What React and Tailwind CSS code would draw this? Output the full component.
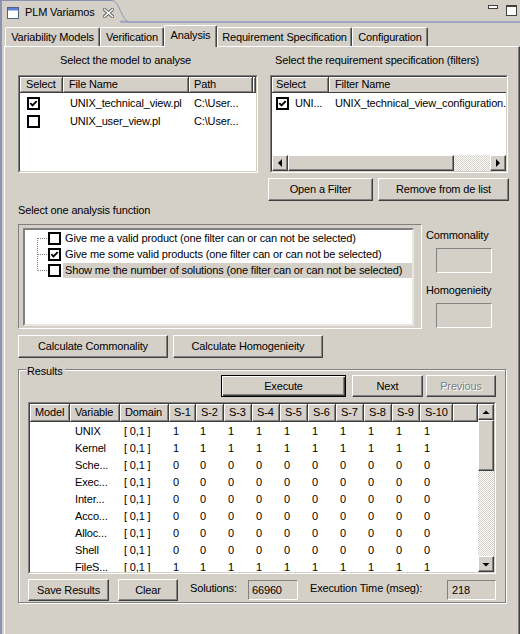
import React from "react";

const RAISED =
  "border border-t-white border-l-white border-r-[#404040] border-b-[#404040] shadow-[inset_-1px_-1px_0_#808080] bg-[#d4d0c8]";
const HCELL =
  "flex items-center h-full shrink-0 border-r border-b border-r-[#404040] border-b-[#404040] shadow-[inset_1px_1px_0_#fff,inset_-1px_-1px_0_#808080] bg-[#d4d0c8]";
const SUNKEN_OUT = "border border-t-[#808080] border-l-[#808080] border-r-white border-b-white";
const SUNKEN_IN = "border border-t-[#404040] border-l-[#404040] border-r-[#d4d0c8] border-b-[#d4d0c8]";
const HATCH = "bg-[repeating-conic-gradient(#d4d0c8_0_25%,#ffffff_0_50%)] bg-[length:2px_2px]";

function Btn({ className = "", children, disabled }) {
  return (
    <div
      className={`${RAISED} flex items-center justify-center shrink-0 whitespace-nowrap ${
        disabled ? "text-[#808080] [text-shadow:1px_1px_0_#fff]" : ""
      } ${className}`}
    >
      {children}
    </div>
  );
}

function Check({ checked }) {
  return (
    <div className="w-[13px] h-[13px] border-2 border-black bg-white flex items-center justify-center shrink-0">
      {checked && (
        <svg width="9" height="9" viewBox="0 0 9 9">
          <path d="M1.3 4.2 L3.5 6.4 L7.7 2.1" fill="none" stroke="#000" strokeWidth="1.9" />
        </svg>
      )}
    </div>
  );
}

function ArrowBtn({ dir }) {
  const pts = {
    left: "5,7 9,3 9,11",
    right: "9,7 5,3 5,11",
    up: "3.5,9 7,5.5 10.5,9",
    down: "3.5,6 10.5,6 7,9.5",
  }[dir];
  return (
    <div className={`${RAISED} w-[16px] h-[16px] shrink-0 flex items-center justify-center`}>
      <svg width="14" height="14" viewBox="0 0 14 14">
        <polygon points={pts} fill="#000" />
      </svg>
    </div>
  );
}

function Conn({ pos }) {
  const y1 = pos === "first" ? 8 : 0;
  const y2 = pos === "last" ? 8.5 : 16;
  return (
    <svg width="23" height="16" className="shrink-0">
      <line x1="12.5" y1={y1} x2="12.5" y2={y2} stroke="#808080" strokeDasharray="1 1" />
      <line x1="13" y1="8.5" x2="23" y2="8.5" stroke="#808080" strokeDasharray="1 1" />
    </svg>
  );
}

function Tab({ children, w, selected }) {
  return (
    <div
      className={`${w} shrink-0 flex items-center justify-center whitespace-nowrap border-t border-l border-white border-r border-r-[#404040] shadow-[inset_-1px_0_0_#808080] rounded-tl-[2px] rounded-tr-[2px] bg-[#d4d0c8] ${
        selected ? "h-[22px] -mb-px relative z-10 pb-[3px]" : "h-[19px]"
      }`}
    >
      {children}
    </div>
  );
}

const COLS = [
  { h: "Model", w: "w-[40px]" },
  { h: "Variable", w: "w-[50px]" },
  { h: "Domain", w: "w-[49px]" },
  { h: "S-1", w: "w-[27px]" },
  { h: "S-2", w: "w-[28px]" },
  { h: "S-3", w: "w-[28px]" },
  { h: "S-4", w: "w-[28px]" },
  { h: "S-5", w: "w-[28px]" },
  { h: "S-6", w: "w-[28px]" },
  { h: "S-7", w: "w-[28px]" },
  { h: "S-8", w: "w-[28px]" },
  { h: "S-9", w: "w-[28px]" },
  { h: "S-10", w: "w-[33px]" },
];

const ROWS = [
  ["UNIX", 1],
  ["Kernel", 1],
  ["Sche...", 0],
  ["Exec...", 0],
  ["Inter...", 0],
  ["Acco...", 0],
  ["Alloc...", 0],
  ["Shell", 0],
  ["FileS...", 1],
];

export default function App() {
  return (
    <div className="w-[520px] h-[634px] overflow-hidden bg-[#d4d0c8] text-black text-[11px] leading-[13px] tracking-[-0.15px] font-['Liberation_Sans',Arial,sans-serif] flex flex-col border-l-2 border-[#8a93b0]">
      {/* Title bar */}
      <div className="flex h-[23px] shrink-0">
        <div className="w-[110px] h-full shrink-0 border-t border-[#8a93b0] flex items-center pl-[5px] pt-[1px] whitespace-nowrap">
          <svg width="12" height="12" viewBox="0 0 12 12" className="shrink-0">
            <rect x="0.5" y="0.5" width="11" height="11" fill="#fff" stroke="#4d6185" />
            <rect x="1" y="1" width="10" height="2.5" fill="#5a82d6" />
          </svg>
          <span className="ml-[6px]">PLM Variamos</span>
          <svg width="11" height="10" viewBox="0 0 11 10" className="ml-[8px] shrink-0">
            <path d="M1.5 1.5 L9.5 8.5 M9.5 1.5 L1.5 8.5" stroke="#6b6b6b" strokeWidth="3.4" strokeLinecap="square" />
            <path d="M1.5 1.5 L9.5 8.5 M9.5 1.5 L1.5 8.5" stroke="#fff" strokeWidth="1.4" strokeLinecap="square" />
          </svg>
        </div>
        <svg width="18" height="23" className="shrink-0">
          <path d="M0 0.5 C 8 0.5, 9 22, 18 22" fill="none" stroke="#8a93b0" strokeWidth="1" />
          <rect x="0" y="21" width="18" height="2" fill="#d4d0c8" />
          <path d="M8 21.5 C 12 22, 14 22, 18 22" fill="none" stroke="#9ea5c0" strokeWidth="2" />
        </svg>
        <div className="flex-1 border-b-2 border-[#9ea5c0] flex justify-end items-start pt-[5px] pr-[3px] gap-[8px]">
          <div className="w-[10px] h-[4px] border border-[#404040] bg-white" />
          <div className="w-[11px] h-[11px] border border-[#404040] border-t-2 bg-white" />
        </div>
      </div>

      {/* Body */}
      <div className="flex-1 flex flex-col pl-[2px]">
        {/* Tabs */}
        <div className="h-[23px] shrink-0 flex items-end pl-[1px]">
          <Tab w="w-[95px]">Variability Models</Tab>
          <Tab w="w-[64px]">Verification</Tab>
          <Tab w="w-[53px]" selected>
            Analysis
          </Tab>
          <Tab w="w-[135px]">Requirement Specification</Tab>
          <Tab w="w-[76px]">Configuration</Tab>
        </div>

        {/* Panel */}
        <div className="flex-1 flex flex-col border-t border-l border-white border-r border-r-[#404040] shadow-[inset_-1px_0_0_#808080] pl-[13px] pt-[7px]">
          {/* Top section */}
          <div className="flex">
            <div className="w-[240px] flex flex-col shrink-0">
              <div className="h-[13px] pl-[42px] whitespace-nowrap">Select the model to analyse</div>
              <div className={`mt-[8px] h-[98px] ${SUNKEN_OUT}`}>
                <div className={`h-full ${SUNKEN_IN} bg-white flex flex-col overflow-hidden`}>
                  <div className="flex h-[16px] shrink-0 bg-[#d4d0c8]">
                    <div className={`${HCELL} w-[43px] pl-[6px]`}>Select</div>
                    <div className={`${HCELL} w-[126px] pl-[6px]`}>File Name</div>
                    <div className={`${HCELL} w-[64px] pl-[5px]`}>Path</div>
                    <div className={`${HCELL} flex-1`} />
                  </div>
                  <div className="flex items-center h-[18px] shrink-0 mt-[1px]">
                    <div className="w-[43px] pl-[7px] shrink-0">
                      <Check checked />
                    </div>
                    <div className="w-[126px] pl-[7px] shrink-0 whitespace-nowrap">UNIX_technical_view.pl</div>
                    <div className="pl-[5px] whitespace-nowrap">C:\User...</div>
                  </div>
                  <div className="flex items-center h-[18px] shrink-0">
                    <div className="w-[43px] pl-[7px] shrink-0">
                      <Check />
                    </div>
                    <div className="w-[126px] pl-[7px] shrink-0 whitespace-nowrap">UNIX_user_view.pl</div>
                    <div className="pl-[5px] whitespace-nowrap">C:\User...</div>
                  </div>
                </div>
              </div>
            </div>

            <div className="w-[238px] ml-[12px] flex flex-col shrink-0">
              <div className="h-[13px] pl-[5px] whitespace-nowrap">Select the requirement specification (filters)</div>
              <div className={`mt-[8px] h-[98px] ${SUNKEN_OUT}`}>
                <div className={`h-full ${SUNKEN_IN} bg-white flex flex-col overflow-hidden`}>
                  <div className="flex h-[16px] shrink-0 bg-[#d4d0c8]">
                    <div className={`${HCELL} w-[57px] pl-[4px]`}>Select</div>
                    <div className={`${HCELL} flex-1 pl-[6px] border-r-0 shadow-[inset_1px_1px_0_#fff]`}>Filter Name</div>
                  </div>
                  <div className="flex items-center h-[18px] shrink-0 mt-[1px]">
                    <div className="w-[57px] pl-[4px] shrink-0 flex items-center">
                      <Check checked />
                      <span className="ml-[6px]">UNI...</span>
                    </div>
                    <div className="pl-[6px] whitespace-nowrap overflow-hidden">UNIX_technical_view_configuration.</div>
                  </div>
                  <div className="flex-1" />
                  <div className="flex h-[16px] shrink-0">
                    <ArrowBtn dir="left" />
                    <div className={`${RAISED} w-[166px] h-[16px] shrink-0`} />
                    <div className={`flex-1 ${HATCH}`} />
                    <ArrowBtn dir="right" />
                  </div>
                </div>
              </div>
              <div className="flex mt-[5px] -ml-[2px] w-[240px]">
                <Btn className="w-[105px] h-[23px]">Open a Filter</Btn>
                <Btn className="w-[131px] h-[23px] ml-[5px]">Remove from de list</Btn>
              </div>
            </div>
          </div>

          {/* Analysis function */}
          <div className="mt-[3px] h-[13px]">Select one analysis function</div>
          <div className="mt-[7px] flex">
            <div className={`w-[404px] h-[105px] shrink-0 ${SUNKEN_OUT} pt-[3px] pl-[4px] pr-[7px] pb-[2px]`}>
              <div className="h-full border-2 border-t-[#808080] border-l-[#808080] border-r-[#e8e6e2] border-b-[#e8e6e2] bg-white flex flex-col overflow-hidden">
                {[
                  ["Give me a valid product (one filter can or can not be selected)", false, "first", false],
                  ["Give me some valid products (one filter can or can not be selected)", true, "mid", false],
                  ["Show me the number of solutions (one filter can or can not be selected)", false, "last", true],
                ].map(([t, c, p, sel]) => (
                  <div key={t} className="flex items-center h-[16px] shrink-0">
                    <Conn pos={p} />
                    <Check checked={c} />
                    <div
                      className={`flex-1 h-[15px] ml-[2px] pl-[2px] flex items-center whitespace-nowrap ${
                        sel ? "bg-[#d4d0c8]" : ""
                      }`}
                    >
                      {t}
                    </div>
                  </div>
                ))}
              </div>
            </div>
            <div className="flex flex-col ml-[4px]">
              <div className="mt-[5px] h-[13px]">Commonality</div>
              <div className={`mt-[6px] ml-[10px] w-[56px] h-[25px] ${SUNKEN_OUT}`} />
              <div className="mt-[11px] h-[13px]">Homogenieity</div>
              <div className={`mt-[6px] ml-[10px] w-[56px] h-[25px] ${SUNKEN_OUT}`} />
            </div>
          </div>

          <div className="flex mt-[6px]">
            <Btn className="w-[150px] h-[23px]">Calculate Commonality</Btn>
            <Btn className="w-[150px] h-[23px] ml-[5px]">Calculate Homogenieity</Btn>
          </div>

          {/* Results group */}
          <div className="relative mt-[11px] w-[488px] h-[234px] border border-[#808080] shadow-[inset_1px_1px_0_#fff,1px_1px_0_#fff] flex flex-col pl-[9px] pr-[9px] pt-[5px]">
            <div className="absolute -top-[5px] left-[7px] bg-[#d4d0c8] pl-[1px] pr-[2px]">Results</div>
            <div className="flex justify-end">
              <div className="w-[125px] h-[22px] border border-black shadow-[inset_1px_1px_0_#fff,inset_-1px_-1px_0_#404040,inset_-2px_-2px_0_#808080] flex items-center justify-center">
                Execute
              </div>
              <Btn className="w-[71px] h-[22px] ml-[6px]">Next</Btn>
              <Btn className="w-[70px] h-[22px] ml-[3px]" disabled>
                Previous
              </Btn>
            </div>

            <div className={`mt-[5px] h-[172px] ${SUNKEN_OUT}`}>
              <div className={`h-full ${SUNKEN_IN} bg-white flex overflow-hidden`}>
                <div className="flex-1 flex flex-col overflow-hidden">
                  <div className="flex h-[18px] shrink-0">
                    {COLS.map((c) => (
                      <div key={c.h} className={`${HCELL} ${c.w} pl-[5px]`}>
                        {c.h}
                      </div>
                    ))}
                    <div className={`${HCELL} flex-1`} />
                  </div>
                  {ROWS.map(([name, v]) => (
                    <div key={name} className="flex h-[17px] shrink-0 items-center pt-[2px]">
                      <div className="w-[40px] shrink-0" />
                      <div className="w-[50px] shrink-0 pl-[5px] whitespace-nowrap">{name}</div>
                      <div className="w-[49px] shrink-0 pl-[4px] whitespace-nowrap">[ 0,1 ]</div>
                      {COLS.slice(3).map((c) => (
                        <div key={c.h} className={`${c.w} shrink-0 pl-[4px]`}>
                          {v}
                        </div>
                      ))}
                    </div>
                  ))}
                </div>
                <div className="w-[16px] shrink-0 flex flex-col">
                  <ArrowBtn dir="up" />
                  <div className={`${RAISED} h-[51px] shrink-0`} />
                  <div className={`flex-1 ${HATCH}`} />
                  <ArrowBtn dir="down" />
                </div>
              </div>
            </div>

            <div className="mt-[5px] flex items-center h-[22px]">
              <Btn className="w-[81px] h-[22px]">Save Results</Btn>
              <Btn className="w-[60px] h-[22px] ml-[9px]">Clear</Btn>
              <div className="ml-[12px] w-[58px] shrink-0 -mt-[4px] whitespace-nowrap">Solutions:</div>
              <div className={`w-[50px] h-[20px] shrink-0 ${SUNKEN_OUT} flex items-center pl-[3px]`}>66960</div>
              <div className="ml-[12px] w-[137px] shrink-0 -mt-[4px] whitespace-nowrap">Execution Time (mseg):</div>
              <div className={`w-[49px] h-[20px] shrink-0 ${SUNKEN_OUT} flex items-center pl-[4px]`}>218</div>
            </div>
          </div>
        </div>
      </div>
    </div>
  );
}
